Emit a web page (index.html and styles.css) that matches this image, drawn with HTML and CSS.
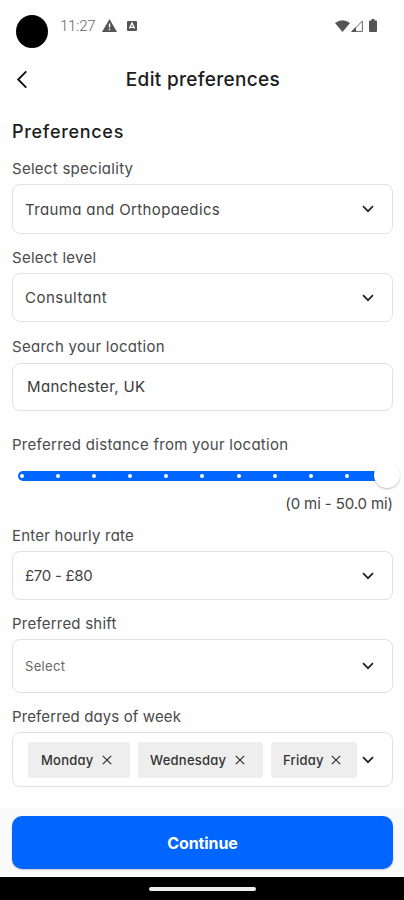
FILE: index.html
```html
<!DOCTYPE html>
<html lang="en">
<head>
<meta charset="utf-8">
<title>Edit preferences</title>
<link rel="stylesheet" href="styles.css">
</head>
<body>
<svg width="0" height="0" class="defs">
  <symbol id="chevron" viewBox="0 0 12 8"><path d="M1 1.2 6 6.2 11 1.2" fill="none" stroke="currentColor" stroke-width="1.7"/></symbol>
  <symbol id="close" viewBox="0 0 10 10"><path d="M.8.8 9.2 9.2M9.2.8.8 9.2" fill="none" stroke="currentColor" stroke-width="1.2"/></symbol>
</svg>
<div class="screen">
  <div class="status">
    <span class="camera"></span>
    <span class="time">11:27</span>
    <svg class="warn" viewBox="0 0 15 13"><path d="M7.5 0 15 13H0Z" fill="#555"/><path d="M7.5 4.5v4M7.5 9.7v1.5" stroke="#fff" stroke-width="1.4"/></svg>
    <svg class="app" viewBox="0 0 10 10"><rect width="10" height="10" rx="1" fill="#555"/><path d="M2.5 7.5 5 2l2.7 5.5M3.2 6.3h4" fill="none" stroke="#fff" stroke-width="1.3"/></svg>
    <span class="spacer"></span>
    <svg class="wifi" viewBox="0 0 15 12"><path d="M0 3Q7.500-2.500 15 3L7.500 12Z" fill="#555"/></svg>
    <svg class="signal" viewBox="0 0 12 12"><path d="M11.400 1v10.400H1Z" fill="none" stroke="#666"/><path d="M0 12 5 7v5Z" fill="#555"/></svg>
    <svg class="battery" viewBox="0 0 8 13"><path d="M2.500 0h3v1.500H7Q8 1.500 8 2.500V12Q8 13 7 13H1Q0 13 0 12V2.500Q0 1.500 1 1.500h1.500Z" fill="#555"/></svg>
  </div>
  <header class="header">
    <svg class="back" viewBox="0 0 12 20"><path d="M10.500 1.500 2 10l8.500 8.500" fill="none" stroke="#111" stroke-width="2"/></svg>
    <h1 class="title"><span>Edit preferences</span></h1>
  </header>
  <main class="form">
    <h2 class="section"><span>Preferences</span></h2>
    <div class="field speciality">
      <div class="label">Select speciality</div>
      <div class="box"><span>Trauma and Orthopaedics</span><svg class="chev"><use href="#chevron"/></svg></div>
    </div>
    <div class="field level">
      <div class="label">Select level</div>
      <div class="box"><span>Consultant</span><svg class="chev"><use href="#chevron"/></svg></div>
    </div>
    <div class="field location">
      <div class="label">Search your location</div>
      <div class="box"><span>Manchester, UK</span></div>
    </div>
    <div class="field distance">
      <div class="label">Preferred distance from your location</div>
      <div class="slider"><div class="track"><i></i><i></i><i></i><i></i><i></i><i></i><i></i><i></i><i></i><i></i><i></i></div><span class="thumb"></span></div>
      <div class="range"><span>(0 mi - 50.0 mi)</span></div>
    </div>
    <div class="field rate">
      <div class="label">Enter hourly rate</div>
      <div class="box"><span>£70 - £80</span><svg class="chev"><use href="#chevron"/></svg></div>
    </div>
    <div class="field shift">
      <div class="label">Preferred shift</div>
      <div class="box"><span>Select</span><svg class="chev"><use href="#chevron"/></svg></div>
    </div>
    <div class="field days">
      <div class="label">Preferred days of week</div>
      <div class="box">
        <div class="chip mon"><span>Monday</span><svg><use href="#close"/></svg></div>
        <div class="chip wed"><span>Wednesday</span><svg><use href="#close"/></svg></div>
        <div class="chip fri"><span>Friday</span><svg><use href="#close"/></svg></div>
        <svg class="chev"><use href="#chevron"/></svg>
      </div>
    </div>
  </main>
  <footer class="footer"><div class="button"><span>Continue</span></div></footer>
  <div class="navbar"><span class="home"></span></div>
</div>
</body>
</html>
```
FILE: styles.css
```css
* { box-sizing: border-box; }
body { margin: 0; background: #fefefe; font-family: Inter, "Open Sans", sans-serif; font-feature-settings: "cv11" 1; color: #444; }
.defs { position: absolute; }
svg { display: block; flex: none; }
span { white-space: nowrap; }
.screen { width: 404px; height: 900px; display: flex; flex-direction: column; overflow: hidden; }

.status { height: 54px; flex: none; display: flex; align-items: flex-start; padding: 15px 26px 0 16px; }
.camera { width: 32px; height: 33px; border-radius: 50%; background: #000; margin-right: 12px; }
.time { font: 300 15px/23px Roboto, sans-serif; color: #666; letter-spacing: -.2px; width: 36px; }
.warn { width: 15px; height: 13px; margin: 4px 0 0 6px; }
.app { width: 10px; height: 10px; margin: 6px 0 0 10px; }
.spacer { flex: 1; }
.wifi { width: 15px; height: 12px; margin-top: 5px; }
.signal { width: 12px; height: 12px; margin: 5px 0 0 1px; }
.battery { width: 8px; height: 13px; margin: 4px 1px 0 6px; }

.header { height: 52px; flex: none; display: grid; grid-template-columns: 28px 1fr 28px; align-items: center; padding: 0 0 0 16px; }
.back { width: 12px; height: 19px; margin-top: -1px; }
.title { margin: 0 -14px 0 -28px; font-size: 19px; line-height: 26px; font-weight: 450; color: #1c1c1c; text-align: center; letter-spacing: .32px; }

.form { height: 702px; flex: none; padding: 13px 11px 0 12px; }
.section { margin: 0; font-size: 18px; line-height: 26px; font-weight: 500; color: #1c1c1c; letter-spacing: .7px; }
.field { margin-top: 14px; }
.label { height: 20px; font-size: 15px; line-height: 20px; margin-bottom: 5px; color: #4a4a4a; letter-spacing: .28px; }
.box { height: 49px; border: 1.5px solid #e2e2e2; border-radius: 8px; display: flex; align-items: center; padding: 0 18px 0 12px; background: #fff; font-size: 15px; }
.chev { width: 12px; height: 8px; margin-left: auto; color: #222; }
.speciality .box { height: 50px; letter-spacing: .36px; }
.level .box { letter-spacing: .5px; }
.location { margin-top: 15px; }
.location .box { height: 48px; padding: 0 0 2px 14px; color: #3a3a3a; letter-spacing: .33px; }
.location .label { margin-bottom: 6px; }
.rate .label, .shift .label { letter-spacing: .22px; }
.days .label { letter-spacing: .12px; }
.rate .box { letter-spacing: -.3px; }
.shift .box { height: 54px; font-size: 13px; color: #666; letter-spacing: .35px; }
.days .box { height: 55px; padding-left: 15px; }

.distance { margin-top: 24px; }
.slider { height: 31px; padding: 11px 6px 0; position: relative; }
.track { height: 10px; border-radius: 5px; background: #0066ff; display: flex; align-items: center; justify-content: space-between; padding: 0 2px; }
.track i { width: 4px; height: 4px; border-radius: 50%; background: #fff; }
.thumb { position: absolute; right: -7px; top: 2px; width: 26px; height: 26px; border-radius: 50%; background: #fff; box-shadow: 0 1px 2px rgba(0,0,0,.25); }
.range { height: 20px; margin-top: 3px; font-size: 15px; line-height: 20px; text-align: right; letter-spacing: -.1px; }
.rate { margin-top: 12px; }

.chip { height: 36px; background: #eee; border-radius: 3px; display: flex; align-items: center; justify-content: space-between; font-size: 13px; font-weight: 500; color: #333; letter-spacing: .25px; margin-right: 8px; padding: 0 18px 0 12px; flex: none; }
.chip svg { width: 10px; height: 10px; }
.mon { width: 102px; padding-left: 13px; }
.wed { width: 125px; }
.fri { width: 86px; margin-right: 0; padding-right: 16px; }

.footer { height: 69px; flex: none; background: #fafafa; padding: 8px 11px 0 12px; }
.button { height: 53px; border-radius: 10px; background: #0066ff; box-shadow: 0 1px 2px rgba(0,0,0,.2); display: flex; align-items: center; justify-content: center; color: #fff; font-size: 16px; font-weight: 700; letter-spacing: -.1px; }
.navbar { height: 23px; flex: none; background: #000; padding: 10px 0 0 149px; }
.home { display: block; width: 107px; height: 4px; border-radius: 2px; background: #eee; }
```
